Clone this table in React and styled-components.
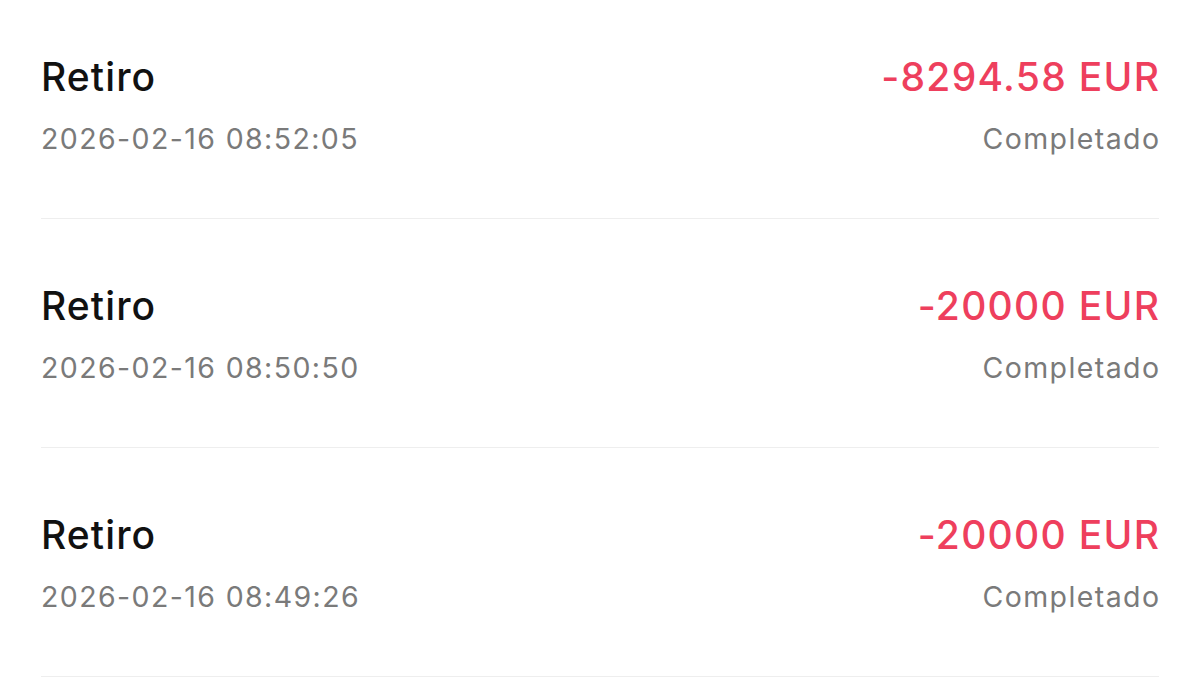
import styled, { createGlobalStyle } from 'styled-components'

const GlobalStyle = createGlobalStyle`
  body {
    margin: 0;
    background: #ffffff;
    font-family: Inter, 'Noto Sans', sans-serif;
  }
`

const ITEMS = [
  { title: 'Retiro', date: '2026-02-16 08:52:05', amount: '-8294.58 EUR', status: 'Completado' },
  { title: 'Retiro', date: '2026-02-16 08:50:50', amount: '-20000 EUR', status: 'Completado' },
  { title: 'Retiro', date: '2026-02-16 08:49:26', amount: '-20000 EUR', status: 'Completado' },
]

export default function App() {
  return (
    <>
      <GlobalStyle />
      <List>
        {ITEMS.map((item, i) => (
          <Row key={i}>
            <Line>
              <Title>{item.title}</Title>
              <Amount>{item.amount}</Amount>
            </Line>
            <Line>
              <Meta>{item.date}</Meta>
              <Meta>{item.status}</Meta>
            </Line>
          </Row>
        ))}
      </List>
    </>
  )
}

const List = styled.div`
  padding: 0 41px;
  display: flex;
  flex-direction: column;
`

const Row = styled.div`
  display: flex;
  flex-direction: column;
  gap: 19px;
  padding: 62px 0 61px;
  border-bottom: 1px solid #eeeeee;
  &:first-child {
    padding-top: 52px;
  }
`

const Line = styled.div`
  display: flex;
  justify-content: space-between;
  align-items: center;
`

const Title = styled.span`
  font-size: 39px;
  line-height: 50px;
  font-weight: 500;
  letter-spacing: 1.1px;
  color: #111111;
`

const Amount = styled(Title)`
  color: #ee3f5d;
  letter-spacing: 1.3px;
  margin-right: -1.3px;
`

const Meta = styled.span`
  font-size: 28.5px;
  line-height: 36px;
  letter-spacing: 1.4px;
  color: #7a7a7a;
  &:last-child {
    margin-right: -1.4px;
  }
`
